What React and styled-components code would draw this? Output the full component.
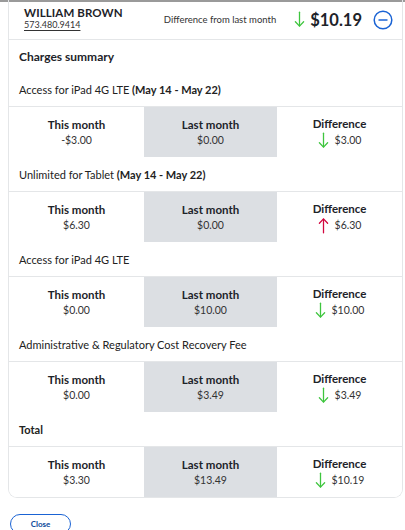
import styled, { createGlobalStyle } from "styled-components";

const GlobalStyle = createGlobalStyle`
  html, body {
    margin: 0;
    padding: 0;
    background: #ffffff;
  }
  body {
    font-family: Lato, "Open Sans", Arial, sans-serif;
    color: #1d2329;
  }
`;

const charges = [
  {
    label: "Access for iPad 4G LTE",
    period: "(May 14 - May 22)",
    thisMonth: "-$3.00",
    lastMonth: "$0.00",
    diff: "$3.00",
    dir: "down",
  },
  {
    label: "Unlimited for Tablet",
    period: "(May 14 - May 22)",
    thisMonth: "$6.30",
    lastMonth: "$0.00",
    diff: "$6.30",
    dir: "up",
  },
  {
    label: "Access for iPad 4G LTE",
    thisMonth: "$0.00",
    lastMonth: "$10.00",
    diff: "$10.00",
    dir: "down",
  },
  {
    label: "Administrative & Regulatory Cost Recovery Fee",
    thisMonth: "$0.00",
    lastMonth: "$3.49",
    diff: "$3.49",
    dir: "down",
  },
];

function Arrow({ dir }) {
  const up = dir === "up";
  return (
    <ArrowSvg viewBox="0 0 12 18" width="11" height="17" $up={up}>
      {up ? (
        <>
          <line x1="6" y1="2" x2="6" y2="17" />
          <polyline points="1.5,6.5 6,1.8 10.5,6.5" />
        </>
      ) : (
        <>
          <line x1="6" y1="1" x2="6" y2="16" />
          <polyline points="1.5,11.5 6,16.2 10.5,11.5" />
        </>
      )}
    </ArrowSvg>
  );
}

function MinusCircle() {
  return (
    <svg width="20" height="20" viewBox="0 0 20 20">
      <circle cx="10" cy="10" r="8.8" fill="none" stroke="#1a63d4" strokeWidth="1.5" />
      <line x1="5.5" y1="10" x2="14.5" y2="10" stroke="#1a63d4" strokeWidth="1.5" />
    </svg>
  );
}

function Compare({ thisMonth, lastMonth, diff, dir }) {
  return (
    <CompareGrid>
      <Cell>
        <CellTitle>This month</CellTitle>
        <CellValue>{thisMonth}</CellValue>
      </Cell>
      <Cell $shaded>
        <CellTitle>Last month</CellTitle>
        <CellValue>{lastMonth}</CellValue>
      </Cell>
      <Cell>
        <CellTitle>Difference</CellTitle>
        <DiffValue>
          <Arrow dir={dir} />
          <CellValue>{diff}</CellValue>
        </DiffValue>
      </Cell>
    </CompareGrid>
  );
}

export default function App() {
  return (
    <>
      <GlobalStyle />
      <TopEdge />
      <Card>
        <Header>
          <Who>
            <Name>WILLIAM BROWN</Name>
            <Phone>573.480.9414</Phone>
          </Who>
          <HeaderDiff>
            <DiffLabel>Difference from last month</DiffLabel>
            <Arrow dir="down" />
            <BigAmount>$10.19</BigAmount>
          </HeaderDiff>
          <MinusCircle />
        </Header>
        <SummaryTitle>Charges summary</SummaryTitle>
        {charges.map((c, i) => (
          <div key={i}>
            <ChargeLabel>
              {c.label}
              {c.period && <b> {c.period}</b>}
            </ChargeLabel>
            <Compare {...c} />
          </div>
        ))}
        <ChargeLabel>
          <b>Total</b>
        </ChargeLabel>
        <Compare thisMonth="$3.30" lastMonth="$13.49" diff="$10.19" dir="down" />
      </Card>
      <Footer>
        <CloseButton>Close</CloseButton>
      </Footer>
    </>
  );
}

const TopEdge = styled.div`
  height: 2px;
  background: #9a9a9a;
`;

const Card = styled.div`
  margin-left: 8px;
  width: 393px;
  margin-top: -2px;
  border: 1px solid #e4e6e8;
  border-top: none;
  border-radius: 0 0 9px 9px;
  overflow: hidden;
`;

const Header = styled.div`
  height: 39px;
  display: flex;
  align-items: center;
  padding: 0 9px 0 15px;
  border-bottom: 1px solid #e4e6e8;
`;

const Who = styled.div`
  display: flex;
  flex-direction: column;
  margin-top: -3px;
`;

const Name = styled.div`
  font-size: 11.5px;
  font-weight: 700;
  letter-spacing: 0.1px;
  line-height: 13px;
`;

const Phone = styled.div`
  font-size: 9px;
  line-height: 12px;
  color: #333;
  text-decoration: underline;
  text-underline-offset: 2px;
`;

const HeaderDiff = styled.div`
  margin-left: auto;
  display: flex;
  align-items: center;
  margin-right: 11px;
`;

const DiffLabel = styled.span`
  font-size: 9.5px;
  color: #333;
  margin-right: 18px;
`;

const BigAmount = styled.span`
  font-size: 16.5px;
  font-weight: 700;
  margin-left: 5px;
`;

const SummaryTitle = styled.div`
  height: 32px;
  display: flex;
  align-items: center;
  padding-left: 10px;
  font-size: 12px;
  font-weight: 700;
`;

const ChargeLabel = styled.div`
  height: 34px;
  display: flex;
  align-items: center;
  padding-left: 10px;
  font-size: 11px;
  color: #222;
  border-bottom: 1px solid #e4e6e8;

  b {
    font-weight: 700;
    white-space: pre;
  }
`;

const CompareGrid = styled.div`
  display: grid;
  grid-template-columns: 135px 133px 1fr;
  height: 50px;
  border-bottom: 1px solid #e4e6e8;

  &:last-child {
    border-bottom: none;
  }
`;

const Cell = styled.div`
  display: flex;
  flex-direction: column;
  align-items: center;
  justify-content: center;
  background: ${(p) => (p.$shaded ? "#dcdfe3" : "#ffffff")};
`;

const CellTitle = styled.div`
  font-size: 11.5px;
  font-weight: 700;
  line-height: 17px;
`;

const CellValue = styled.div`
  font-size: 10.5px;
  line-height: 15px;
  color: #333;
`;

const DiffValue = styled.div`
  display: flex;
  align-items: center;
  gap: 6px;
`;

const ArrowSvg = styled.svg`
  fill: none;
  stroke: ${(p) => (p.$up ? "#d2073f" : "#3ec53e")};
  stroke-width: 1.4;
  stroke-linecap: round;
  stroke-linejoin: round;
  flex-shrink: 0;
`;

const Footer = styled.div`
  padding: 13px 0 0 10px;
`;

const CloseButton = styled.button`
  width: 61px;
  height: 20px;
  border: 1.5px solid #1a63d4;
  border-radius: 12px;
  background: #ffffff;
  color: #0c4a9a;
  font-family: Lato, "Open Sans", Arial, sans-serif;
  font-size: 8px;
  font-weight: 700;
  padding: 0;
`;
